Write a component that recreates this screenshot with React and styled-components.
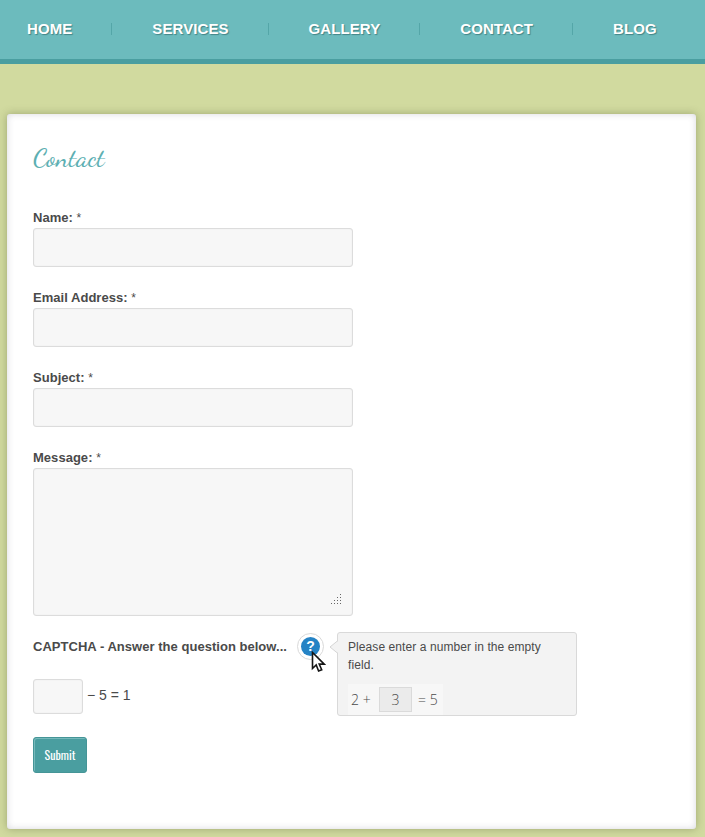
import React from "react";
import styled, { createGlobalStyle } from "styled-components";

const GlobalStyle = createGlobalStyle`
  *, *::before, *::after { box-sizing: border-box; }
  body {
    margin: 0;
    background: #d1da9f;
    color: #4a4a4a;
    font-family: "Liberation Sans", Arial, sans-serif;
    overflow: hidden;
  }
`;

const Header = styled.nav`
  display: flex;
  height: 64px;
  padding: 22px 0 0 27px;
  background: #6cbbbd;
  border-bottom: 5px solid #4a9ea0;
`;

const NavItem = styled.a`
  height: 14px;
  margin-right: 40px;
  font-size: 15px;
  line-height: 14px;
  font-weight: bold;
  letter-spacing: 0.08px;
  color: #fff;
  text-shadow: 1px 1px 1px #438487;
  white-space: nowrap;
`;

const NavDivider = styled.span`
  width: 1px;
  height: 12px;
  margin: 1px 40px 0 -1px;
  background: #54a6a8;
`;

const Page = styled.main`
  width: 689px;
  height: 715px;
  margin: 50px 0 8px 7px;
  padding: 27px 26px 0;
  background: #fff;
  border-radius: 3px;
  box-shadow: 0 0 8px rgba(70, 80, 40, 0.38), inset 0 0 7px rgba(60, 60, 90, 0.2);
`;

const Title = styled.h1`
  height: 34px;
  margin: 0 0 34px;
  font-family: "Satisfy", "Dancing Script", cursive;
  font-size: 26px;
  line-height: 33px;
  font-weight: 500;
  letter-spacing: 0.3px;
  color: #5dafb2;
`;

const Field = styled.label`
  display: block;
  margin-bottom: 22px;
`;

const Label = styled.span`
  display: block;
  height: 19px;
  font-size: 13px;
  line-height: 18px;
  font-weight: bold;
  letter-spacing: 0.03px;
  white-space: nowrap;
`;

const Required = styled.span`
  font-size: 12px;
  font-weight: normal;
`;

const Input = styled.input`
  display: block;
  width: ${(p) => p.$width || 320}px;
  height: ${(p) => p.$height || 39}px;
  padding: 8px;
  background: #f7f7f7;
  border: 1px solid #dcdcdc;
  border-radius: 3px;
  box-shadow: inset 0 0 1px #dcdcdc;
  font: inherit;
  outline: none;
`;

const MessageBox = styled.div`
  position: relative;
  width: 320px;
`;

const TextArea = styled(Input).attrs({ as: "textarea" })`
  resize: none;
`;

const Grip = styled.svg`
  position: absolute;
  right: 12px;
  bottom: 12px;
`;

const CaptchaHeading = styled.div`
  display: flex;
  align-items: center;
  justify-content: space-between;
  position: relative;
  width: 291px;
  height: 28px;
  margin-top: -6px;

  ${Label} { line-height: 20px; }
`;

const Help = styled.button`
  position: relative;
  width: 27px;
  height: 27px;
  padding: 0;
  background: #fff;
  border: 1px solid #d9d9d9;
  border-radius: 50%;
`;

const HelpDisc = styled.span`
  display: block;
  width: 19px;
  height: 19px;
  margin: 0 auto;
  background: #2583c5;
  border-radius: 50%;
  color: #fff;
  font: bold 14px/19px "Liberation Sans", Arial, sans-serif;
  text-align: center;
`;

const Cursor = styled.svg`
  position: absolute;
  left: 13px;
  top: 17px;
`;

const Tooltip = styled.aside`
  position: absolute;
  left: 304px;
  top: 0;
  width: 240px;
  height: 84px;
  padding: 5px 10px 0;
  background: #f3f3f3;
  border: 1px solid #d9d9d9;
  border-radius: 3px;
  font-size: 12px;
  line-height: 18px;
  letter-spacing: 0.08px;
`;

const Arrow = styled.svg`
  position: absolute;
  left: -9px;
  top: 6px;
`;

const Example = styled.div`
  display: flex;
  align-items: center;
  width: 95px;
  height: 31px;
  margin-top: 10px;
  padding-left: 3px;
  background: #f7f7f7;
  font-family: "Open Sans", sans-serif;
  font-weight: 300;
  font-size: 14px;
  letter-spacing: 0;
  white-space: nowrap;
`;

const Operand = styled.span`
  width: 21px;
`;

const ExampleNumber = styled.span`
  width: 33px;
  height: 25px;
  margin: 0 6px 0 7px;
  background: #ebebeb;
  border: 1px solid #dadada;
  line-height: 23px;
  text-align: center;
`;

const Question = styled.div`
  display: flex;
  align-items: center;
  gap: 4px;
  height: 35px;
  margin: 19px 0 23px;
  font-size: 14px;
  line-height: 30px;

  span { padding-bottom: 4px; }
`;

const Submit = styled.button`
  display: flex;
  align-items: center;
  justify-content: center;
  width: 54px;
  height: 36px;
  padding: 0;
  background: #4a9ea0;
  border: 1px solid #459597;
  border-radius: 3px;
  box-shadow: inset 1px 1px 0 #76b9bb;
  color: #fff;
`;

const SubmitText = styled.span`
  font-family: "Oswald", "Roboto", sans-serif;
  font-size: 12px;
  line-height: 18px;
  font-weight: 400;
`;

const links = ["HOME", "SERVICES", "GALLERY", "CONTACT", "BLOG"];
const gripDots = [[9, 0], [6, 3], [9, 3], [3, 6], [6, 6], [9, 6], [0, 9], [3, 9], [6, 9], [9, 9]];

export default function App() {
  return (
    <>
      <GlobalStyle />
      <Header>
        {links.map((name, i) => (
          <React.Fragment key={name}>
            {i > 0 && <NavDivider />}
            <NavItem>{name}</NavItem>
          </React.Fragment>
        ))}
      </Header>
      <Page>
        <Title>Contact</Title>
        {["Name:", "Email Address:", "Subject:"].map((name) => (
          <Field key={name}>
            <Label>{name} <Required>*</Required></Label>
            <Input />
          </Field>
        ))}
        <Field>
          <Label>Message: <Required>*</Required></Label>
          <MessageBox>
            <TextArea $height={148} />
            <Grip width="10" height="10" fill="#666" shapeRendering="crispEdges">
              {gripDots.map(([x, y]) => (
                <rect key={`${x}-${y}`} x={x} y={y} width="1" height="1" />
              ))}
            </Grip>
          </MessageBox>
        </Field>
        <CaptchaHeading>
          <Label>CAPTCHA - Answer the question below...</Label>
          <Help aria-label="Help">
            <HelpDisc>?</HelpDisc>
            <Cursor width="15" height="23" viewBox="0 0 15 23">
              <path d="M1.5 1.5v16l3.7-3.5 2.4 6 3.1-1.2-2.5-5.7h5z" fill="#fff" stroke="#151515" strokeWidth="1.6" />
            </Cursor>
          </Help>
          <Tooltip>
            <Arrow width="10" height="16">
              <path d="M10 1L1 8l9 7z" fill="#f3f3f3" />
              <path d="M9 1.5L1 8l8 6.5" fill="none" stroke="#d5d5d5" />
            </Arrow>
            Please enter a number in the empty field.
            <Example>
              <Operand>2 +</Operand>
              <ExampleNumber>3</ExampleNumber>
              <Operand>= 5</Operand>
            </Example>
          </Tooltip>
        </CaptchaHeading>
        <Question>
          <Input $width={50} $height={35} />
          <span>− 5 = 1</span>
        </Question>
        <Submit><SubmitText>Submit</SubmitText></Submit>
      </Page>
    </>
  );
}
